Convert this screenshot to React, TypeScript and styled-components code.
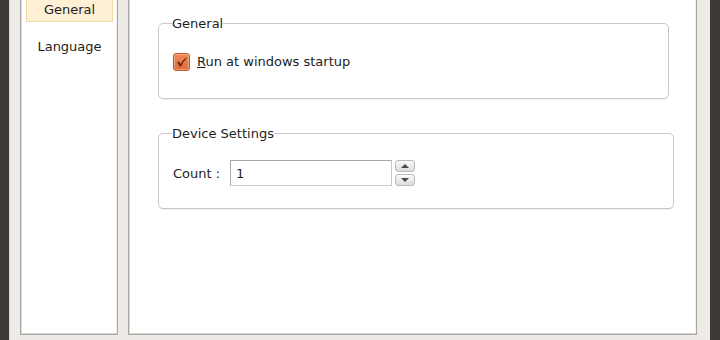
import React, { useState } from 'react';
import styled, { createGlobalStyle, css } from 'styled-components';

const GlobalStyle = createGlobalStyle`
	html, body {
		margin: 0;
		padding: 0;
		background: #3b3a36;
	}
	body {
		font-family: 'DejaVu Sans', Verdana, sans-serif;
		font-size: 13px;
		color: #1e1e1e;
	}
`;

const navItems = ['General', 'Language'];

const App: React.FC = () => {
	const [selected, setSelected] = useState<string>('General');
	const [runAtStartup, setRunAtStartup] = useState<boolean>(true);
	const [count, setCount] = useState<number>(1);

	return (
		<>
			<GlobalStyle />
			<Window>
				<Frame>
					<NavPanel>
						{navItems.map((item) => (
							<NavItem key={item} active={item === selected} onClick={() => setSelected(item)}>
								{item}
							</NavItem>
						))}
					</NavPanel>
					<ContentPanel>
						<GroupBox boxWidth={511} top={15}>
							<Legend>General</Legend>
							<CheckRow onClick={() => setRunAtStartup(!runAtStartup)}>
								<CheckBox checked={runAtStartup}>
									{runAtStartup && (
										<svg width="11" height="10" viewBox="0 0 11 10">
											<path
												d="M1 5.2 L3.2 4.6 L4.6 7 Q6.8 2.6 10.2 0.6 L10.6 1.4 Q7.4 4 5.2 9.4 L3.8 9.4 Z"
												fill="#6a2a12"
											/>
										</svg>
									)}
								</CheckBox>
								<CheckLabel>
									<Mnemonic>R</Mnemonic>un at windows startup
								</CheckLabel>
							</CheckRow>
						</GroupBox>
						<GroupBox boxWidth={516} top={26}>
							<Legend>Device Settings</Legend>
							<FieldRow>
								<FieldLabel>Count :</FieldLabel>
								<NumberInput
									value={count}
									onChange={(e) => setCount(Number(e.target.value) || 0)}
								/>
								<SpinCol>
									<SpinButton onClick={() => setCount(count + 1)}>
										<Arrow dir="up" />
									</SpinButton>
									<SpinButton onClick={() => setCount(Math.max(0, count - 1))}>
										<Arrow dir="down" />
									</SpinButton>
								</SpinCol>
							</FieldRow>
						</GroupBox>
					</ContentPanel>
				</Frame>
			</Window>
		</>
	);
};
export default App;

const Window = styled.div`
	display: flex;
	height: 340px;
	padding: 0 10px 0 9px;
	box-sizing: border-box;
	background: #3b3a36;
`;

const Frame = styled.div`
	flex: 1;
	display: flex;
	gap: 10px;
	padding: 0 13px 5px 11px;
	background: #eeebe7;
	box-shadow: inset 1px 0 0 #d9d6d1;
	box-sizing: border-box;
`;

const Panel = styled.div`
	background: #ffffff;
	border: 1px solid #a9a7a3;
	border-top: none;
	box-shadow: inset 1px -1px 0 #dcd9d5, inset -1px 0 0 #f4f2ef;
	box-sizing: border-box;
`;

const NavPanel = styled(Panel)`
	width: 98px;
	display: flex;
	flex-direction: column;
	gap: 15px;
	padding: 0 4px 0 5px;
`;

const NavItem = styled.div<{ active: boolean }>`
	height: 22px;
	line-height: 20px;
	text-align: center;
	cursor: default;
	border: 1px solid transparent;
	border-top: none;
	box-sizing: border-box;

	${(props) =>
		props.active &&
		css`
			background: #fdf0d4;
			border-color: #f3d9a4;
		`}
`;

const ContentPanel = styled(Panel)`
	flex: 1;
	padding: 0 0 0 29px;
`;

const GroupBox = styled.fieldset<{ boxWidth: number; top: number }>`
	width: ${(props) => props.boxWidth}px;
	height: 84px;
	margin: ${(props) => props.top}px 0 0 0;
	padding: 0 14px;
	border: 1px solid #c9c6cc;
	border-radius: 5px;
	box-sizing: border-box;
	box-shadow: 0 1px 0 #f2f1f3;
`;

const Legend = styled.legend`
	padding: 0;
	margin-left: -1px;
	font-size: 13px;
	line-height: 17px;
`;

const CheckRow = styled.div`
	display: flex;
	align-items: center;
	gap: 7px;
	margin-top: 21px;
	cursor: default;
`;

const CheckBox = styled.div<{ checked: boolean }>`
	width: 17px;
	height: 18px;
	box-sizing: border-box;
	display: flex;
	align-items: center;
	justify-content: center;
	border-radius: 3px;
	border: 1px solid #b8552d;
	background: ${(props) => (props.checked ? 'linear-gradient(#f08a5c, #e06a3c)' : '#ffffff')};
	box-shadow: inset 0 0 0 1px rgba(255, 200, 170, 0.55);
`;

const CheckLabel = styled.span`
	line-height: 18px;
`;

const Mnemonic = styled.span`
	text-decoration: underline;
`;

const FieldRow = styled.div`
	display: flex;
	align-items: center;
	margin-top: 18px;
`;

const FieldLabel = styled.span`
	width: 57px;
`;

const NumberInput = styled.input`
	width: 162px;
	height: 26px;
	box-sizing: border-box;
	border: 1px solid #aaa8a6;
	border-right-color: #c8c6c4;
	border-bottom-color: #cfcdcb;
	padding: 0 5px;
	font-family: 'DejaVu Sans', Verdana, sans-serif;
	font-size: 13px;
	color: #1e1e1e;
	outline: none;
`;

const SpinCol = styled.div`
	display: flex;
	flex-direction: column;
	gap: 2px;
	margin-left: 3px;
`;

const SpinButton = styled.div`
	width: 20px;
	height: 12px;
	box-sizing: border-box;
	border: 1px solid #bdbbb9;
	border-radius: 3px;
	background: linear-gradient(#fbfbfb, #dedcda);
	display: flex;
	align-items: center;
	justify-content: center;
`;

const Arrow = styled.div<{ dir: 'up' | 'down' }>`
	width: 0;
	height: 0;
	border-left: 4px solid transparent;
	border-right: 4px solid transparent;
	${(props) =>
		props.dir === 'up'
			? css`
					border-bottom: 4px solid #4a4a4a;
			  `
			: css`
					border-top: 4px solid #4a4a4a;
			  `}
`;
